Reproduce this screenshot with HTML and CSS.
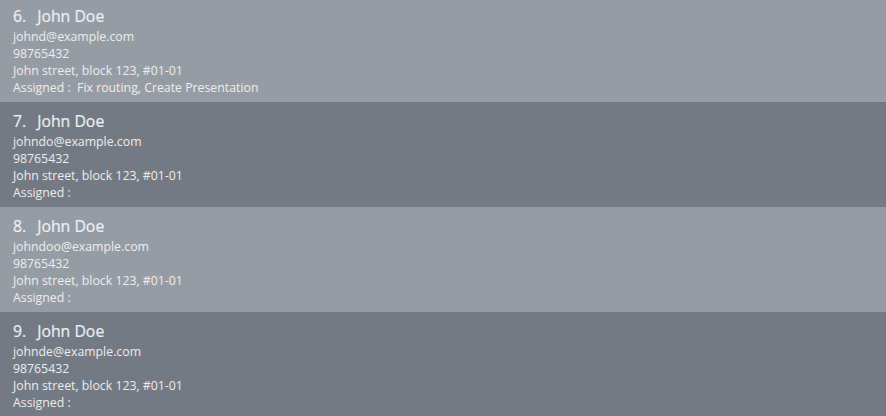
FILE: index.html
```html
<!DOCTYPE html>
<html>
<head>
<meta charset="utf-8">
<link rel="stylesheet" href="styles.css">
</head>
<body>
<div class="list">
  <div class="card light">
    <div class="title"><span class="num">6.</span>John Doe</div>
    <div class="line">johnd@example.com</div>
    <div class="line">98765432</div>
    <div class="line">John street, block 123, #01-01</div>
    <div class="line">Assigned :&nbsp; Fix routing, Create Presentation</div>
  </div>
  <div class="card dark">
    <div class="title"><span class="num">7.</span>John Doe</div>
    <div class="line">johndo@example.com</div>
    <div class="line">98765432</div>
    <div class="line">John street, block 123, #01-01</div>
    <div class="line">Assigned :</div>
  </div>
  <div class="card light">
    <div class="title"><span class="num">8.</span>John Doe</div>
    <div class="line">johndoo@example.com</div>
    <div class="line">98765432</div>
    <div class="line">John street, block 123, #01-01</div>
    <div class="line">Assigned :</div>
  </div>
  <div class="card dark">
    <div class="title"><span class="num">9.</span>John Doe</div>
    <div class="line">johnde@example.com</div>
    <div class="line">98765432</div>
    <div class="line">John street, block 123, #01-01</div>
    <div class="line">Assigned :</div>
  </div>
</div>
</body>
</html>
```
FILE: styles.css
```css
html, body {
  margin: 0;
  padding: 0;
  background: #737a83;
  overflow: hidden;
}
.list {
  margin-top: -3px;
  display: flex;
  flex-direction: column;
  font-family: "Open Sans", "Noto Sans", sans-serif;
  color: #eeeeee;
}
.card {
  height: 105px;
  box-sizing: border-box;
  padding: 7px 13px 6px;
}
.light { background: #969ca4; }
.dark { background: #737a83; }
.title {
  font-size: 15.8px;
  font-weight: 400;
  -webkit-text-stroke: 0.2px #eef0f2;
  line-height: 24px;
  color: #eef0f2;
}
.num {
  margin-right: 11px;
}
.line {
  font-size: 12.3px;
  line-height: 17px;
}
```
